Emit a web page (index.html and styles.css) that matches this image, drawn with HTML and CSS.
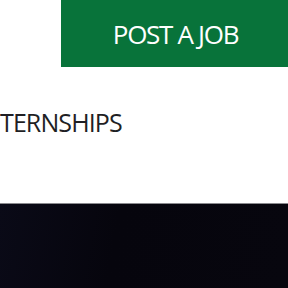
FILE: index.html
```html
<!DOCTYPE html>
<html lang="en">
<head>
    <meta charset="UTF-8">
    <meta name="viewport" content="width=device-width, initial-scale=1.0">
    <link rel="stylesheet" href="styles.css">
    <title>Jobs</title>
</head>
<body>
    <header class="site_header">
        <div class="top_bar">
            <a class="post_job" href="#">POST A JOB</a>
        </div>
        <nav class="main_nav">
            <a class="nav_item" href="#">INTERNSHIPS</a>
        </nav>
    </header>
    <section class="hero"></section>
</body>
</html>
```

FILE: styles.css
```css
body, html {
    margin: 0;
    height: 100%;
    overflow: hidden;
    background-color: #fff;
    font-family: "Open Sans", "Liberation Sans", sans-serif;
}

body {
    display: flex;
    flex-direction: column;
}

.site_header {
    display: flex;
    flex-direction: column;
    height: 203px;
    flex-shrink: 0;
}

.top_bar {
    display: flex;
    justify-content: flex-end;
}

.post_job {
    display: flex;
    align-items: center;
    justify-content: center;
    width: 227px;
    height: 67px;
    padding-left: 2px;
    box-sizing: border-box;
    background-color: #08733a;
    color: #fff;
    font-size: 26px;
    font-weight: 500;
    letter-spacing: -1.3px;
    text-decoration: none;
}

.main_nav {
    display: flex;
    padding-top: 38px;
    margin-left: -24px;
}

.nav_item {
    color: #1f1f24;
    font-size: 25px;
    font-weight: 500;
    letter-spacing: -0.9px;
    text-decoration: none;
}

.hero {
    flex: 1;
    border-top: 1px solid #8a8a8e;
    background: linear-gradient(100deg, #0a0a17 0%, #06050d 40%, #07060e 100%);
}
```
